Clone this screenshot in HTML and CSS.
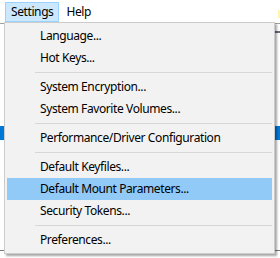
FILE: index.html
```html
<!DOCTYPE html>
<html lang="en">
<head>
  <meta charset="UTF-8" />
  <title>Settings menu</title>
  <link rel="stylesheet" href="styles.css">
</head>
<body>
  <!-- Ventana de fondo (queda casi toda tapada por el menú) -->
  <div class="window">
    <div class="menubar">
      <span class="menubar-item active">Settings</span>
      <span class="menubar-item">Help</span>
      <span class="logo"></span>
    </div>
    <div class="panel">
      <div class="list">
        <div class="list-header"></div>
        <div class="row selected"></div>
      </div>
      <div class="footer-line"></div>
    </div>
  </div>

  <!-- Menú desplegable "Settings" -->
  <div class="dropdown">
    <div class="item">Language...</div>
    <div class="item">Hot Keys...</div>
    <div class="sep"></div>
    <div class="item">System Encryption...</div>
    <div class="item">System Favorite Volumes...</div>
    <div class="sep"></div>
    <div class="item">Performance/Driver Configuration</div>
    <div class="sep"></div>
    <div class="item">Default Keyfiles...</div>
    <div class="item hover">Default Mount Parameters...</div>
    <div class="item">Security Tokens...</div>
    <div class="sep"></div>
    <div class="item">Preferences...</div>
  </div>
</body>
</html>
```

FILE: styles.css
```css
/* Reinicio básico */
* {
  margin: 0;
  padding: 0;
  box-sizing: border-box;
}
html, body {
  width: 280px;
  height: 258px;
  overflow: hidden;
  background: #fff;
  font-family: "Noto Sans", "Open Sans", sans-serif;
  font-size: 12px;
  letter-spacing: -0.4px;
  color: #000;
  position: relative;
}

/* Ventana de fondo */
.window {
  width: 100%;
  height: 100%;
  display: flex;
  flex-direction: column;
}
.menubar {
  height: 23px;
  display: flex;
  align-items: flex-start;
  padding: 2px 0 0 5px;
  gap: 1px;
}
.menubar-item {
  height: 20px;
  line-height: 18px;
  padding: 0 5px;
  border: 1px solid transparent;
}
.menubar-item.active {
  background: #cce8ff;
  border-color: #99d1ff;
}
.logo {
  margin-left: auto;
  margin-top: 8px;
  width: 2px;
  height: 8px;
  background: #fff4b0;
}

.panel {
  flex: 1;
  border-top: 1px solid #a0a0a0;
  display: flex;
  flex-direction: column;
}
.list {
  flex: 1;
  padding-top: 7px;
}
.list-header {
  height: 2px;
  background: #6d6d7a;
  margin-left: 272px;
}
.row {
  height: 14px;
  margin-top: 93px;
}
.row.selected {
  background: #0078d7;
}
.footer-line {
  height: 1px;
  background: #7a7a7a;
  margin-bottom: 7px;
}

/* Menú desplegable */
.dropdown {
  position: absolute;
  top: 22px;
  left: 4px;
  width: 271px;
  background: #f2f2f2;
  border: 1px solid #cccccc;
  padding: 2px;
  box-shadow: 2px 2px 2px rgba(0, 0, 0, 0.35);
  display: flex;
  flex-direction: column;
}
.item {
  height: 22px;
  line-height: 22px;
  padding-left: 33px;
  white-space: nowrap;
}
.item.hover {
  background: #91c9f7;
}
.sep {
  height: 7px;
  display: flex;
  align-items: center;
  padding-left: 28px;
}
.sep::before {
  content: "";
  flex: 1;
  height: 1px;
  background: #d7d7d7;
}
```
